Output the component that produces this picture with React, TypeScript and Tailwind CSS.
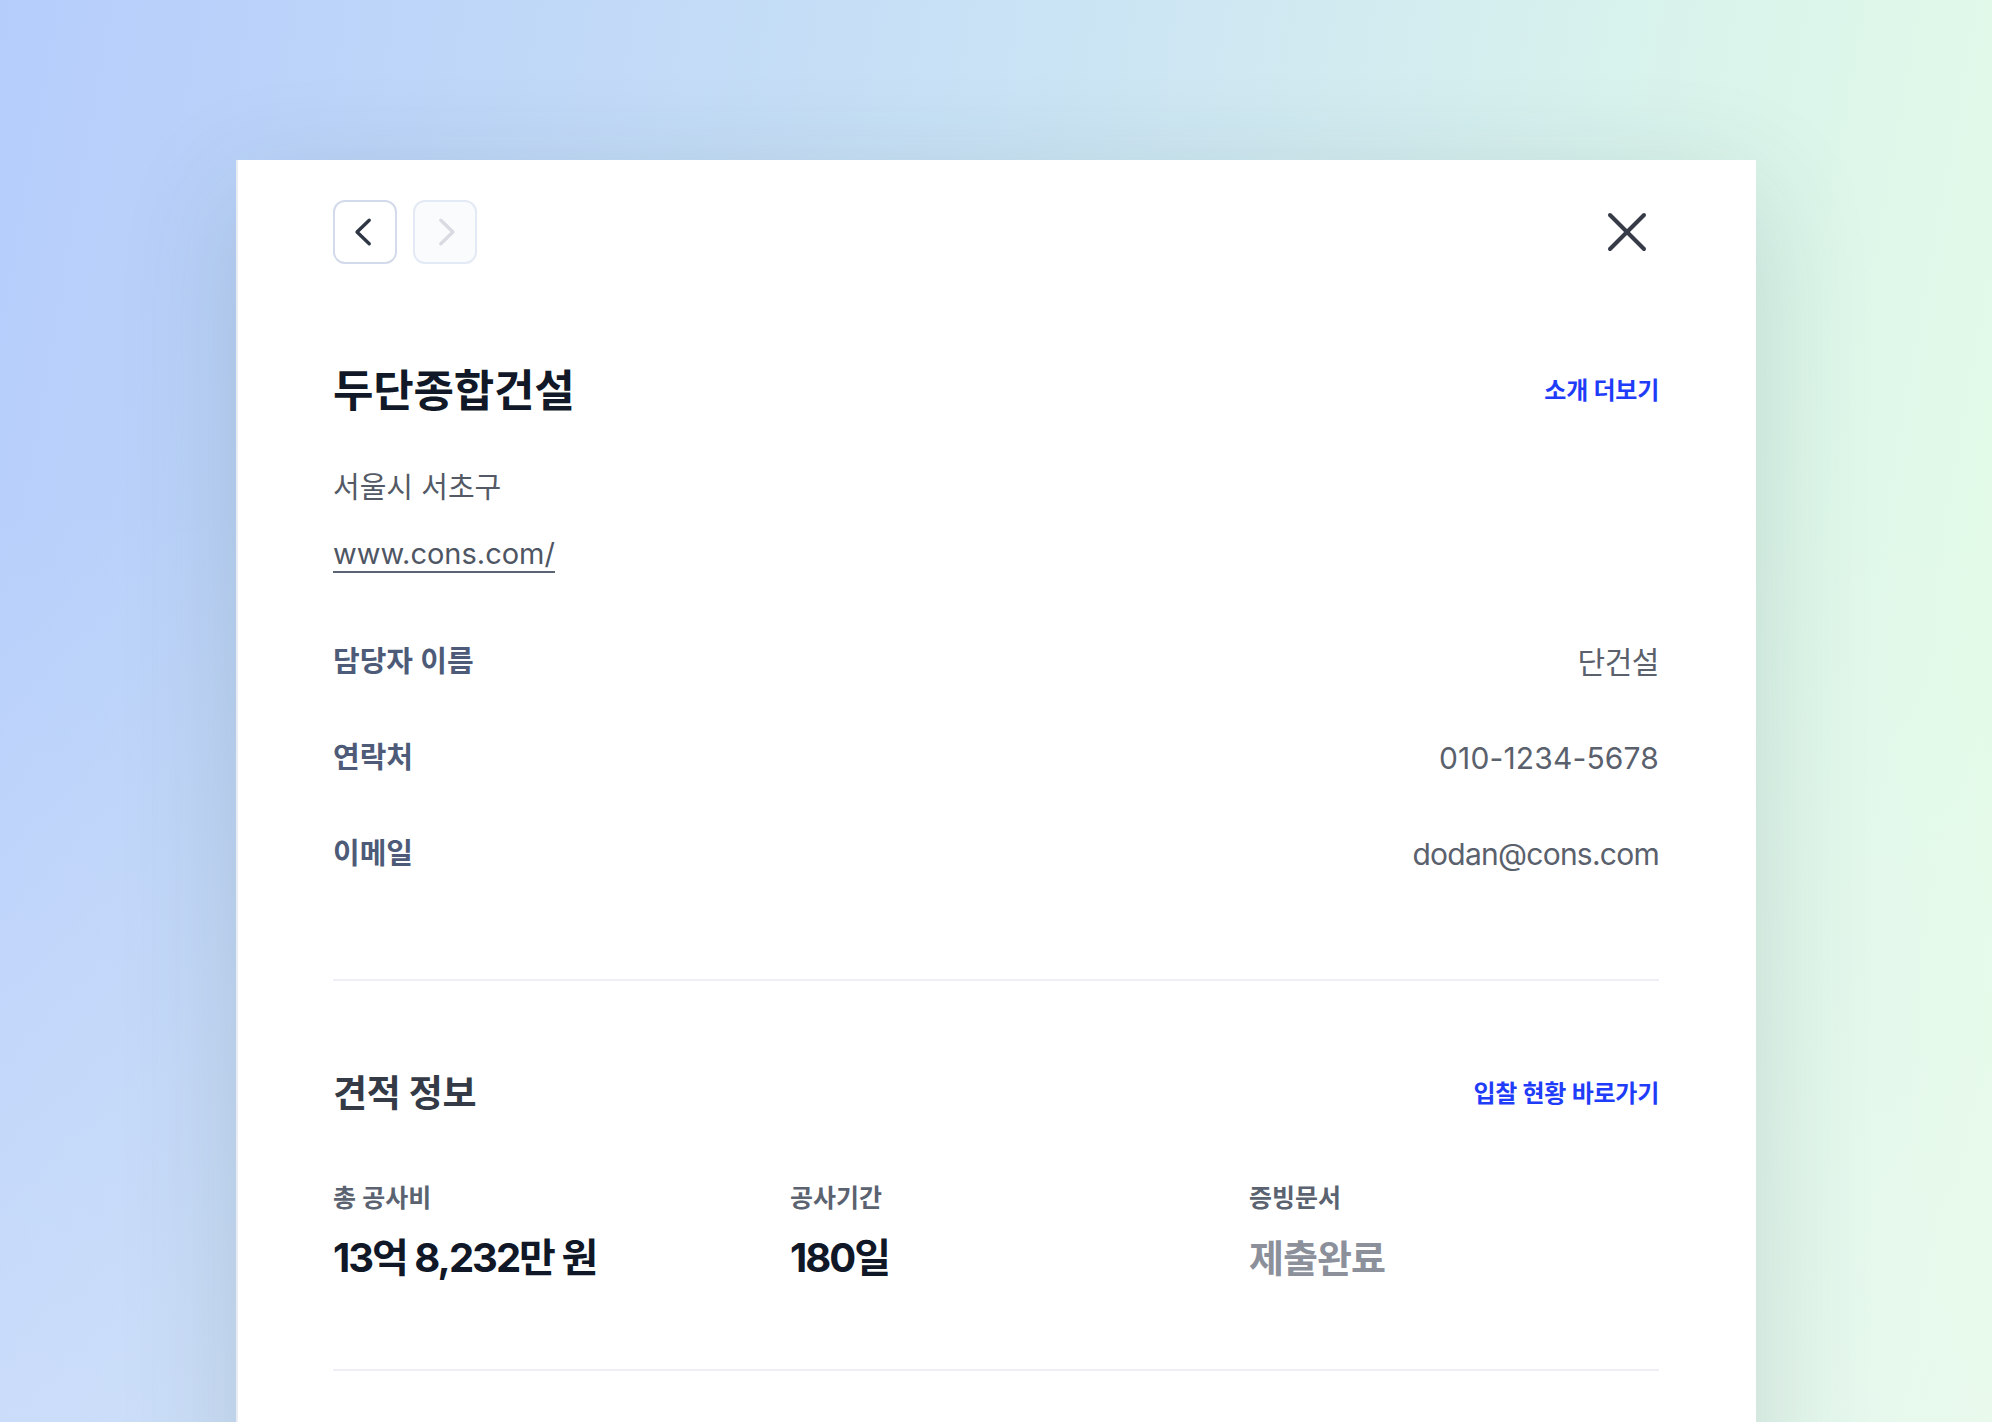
import React from "react";

function ChevronLeft({ color }: { color: string }) {
  return (
    <svg width="64" height="64" viewBox="0 0 64 64" fill="none">
      <polyline points="36.5,19.5 23.5,32 36.5,44.5" stroke={color} strokeWidth="3.6" strokeLinecap="round" strokeLinejoin="round" />
    </svg>
  );
}

function ChevronRight({ color }: { color: string }) {
  return (
    <svg width="64" height="64" viewBox="0 0 64 64" fill="none">
      <polyline points="27.5,19.5 40.5,32 27.5,44.5" stroke={color} strokeWidth="3.6" strokeLinecap="round" strokeLinejoin="round" />
    </svg>
  );
}

function CloseIcon() {
  return (
    <svg width="40" height="40" viewBox="0 0 40 40" fill="none">
      <line x1="3" y1="3" x2="37" y2="37" stroke="#363b47" strokeWidth="4" strokeLinecap="round" />
      <line x1="37" y1="3" x2="3" y2="37" stroke="#363b47" strokeWidth="4" strokeLinecap="round" />
    </svg>
  );
}

function InfoRow({ label, value, valueClass }: { label: string; value: string; valueClass: string }) {
  return (
    <div className="flex h-[40px] items-center justify-between">
      <span className="text-[29px] leading-[40px] font-semibold tracking-[0em] text-[#4d5b78]">{label}</span>
      <span className={valueClass}>{value}</span>
    </div>
  );
}

export default function App() {
  return (
    <div className="h-[1422px] w-full overflow-hidden bg-[linear-gradient(to_bottom,rgba(238,243,250,0)_35%,rgba(238,243,250,0.3)_100%),linear-gradient(100deg,#b5cdfb_0%,#c9e2f5_45%,#d9f3ec_75%,#e6fde6_100%)] pt-[160px] font-['Inter','Noto_Sans_CJK_KR',sans-serif]">
      <div className="mx-auto w-[1520px] border-l-2 border-[#e9ecf2] bg-white pb-[300px] pl-[95px] pr-[97px] pt-[40px] shadow-[0_30px_110px_rgba(40,70,60,0.16)]">
        {/* top bar */}
        <div className="flex h-16 items-center justify-between">
          <div className="flex gap-4">
            <button className="flex h-16 w-16 items-center justify-center rounded-xl border-2 border-[#d3daea] bg-white">
              <ChevronLeft color="#2f3644" />
            </button>
            <button className="flex h-16 w-16 items-center justify-center rounded-xl border-2 border-[#e3e9f5] bg-[#fafbfc]">
              <ChevronRight color="#d8dbe1" />
            </button>
          </div>
          <button className="flex h-16 w-16 items-center justify-center">
            <CloseIcon />
          </button>
        </div>

        {/* title */}
        <div className="mt-[99px] flex h-[56px] items-center justify-between">
          <h1 className="text-[44px] leading-[56px] font-bold tracking-[-0.005em] text-[#111827]">두단종합건설</h1>
          <a className="text-[24px] leading-[56px] font-bold tracking-[-0.01em] text-[#1f3cf8]">소개 더보기</a>
        </div>

        <p className="mt-[49px] h-[40px] text-[29px] leading-[40px] tracking-[0em] text-[#535a66]">서울시 서초구</p>
        <p className="mt-[26px] h-[40px] text-[29px] leading-[40px] tracking-[0em] text-[#4f5663]">
          <span className="underline decoration-[2px] underline-offset-[7px] decoration-[#5b6473]">www.cons.com/</span>
        </p>

        <div className="mt-[68px] flex flex-col gap-[56px]">
          <InfoRow
            label="담당자 이름"
            value="단건설"
            valueClass="text-[30px] leading-[40px] font-normal tracking-[-0.015em] text-[#5a616d]"
          />
          <InfoRow
            label="연락처"
            value="010-1234-5678"
            valueClass="text-[30px] leading-[40px] font-normal tracking-[0.005em] text-[#5a616d]"
          />
          <InfoRow
            label="이메일"
            value="dodan@cons.com"
            valueClass="text-[30px] leading-[40px] font-normal tracking-[-0.025em] text-[#5a616d]"
          />
        </div>

        <div className="mt-[105px] h-[2px] bg-[#eeeff4]" />

        {/* 견적 정보 */}
        <div className="mt-[89px] flex h-[48px] items-center justify-between">
          <h2 className="text-[37px] leading-[48px] font-bold tracking-[-0.01em] text-[#343b47]">견적 정보</h2>
          <a className="text-[24px] leading-[48px] font-bold tracking-[-0.01em] text-[#1f3cf8]">입찰 현황 바로가기</a>
        </div>

        <div className="mt-[64px] grid grid-cols-[457px_459px_1fr]">
          <div className="flex flex-col">
            <span className="h-[32px] text-[25px] leading-[32px] font-semibold tracking-[0em] text-[#5b6270]">총 공사비</span>
            <span className="mt-[20px] h-[48px] text-[40px] leading-[48px] font-bold tracking-[-0.05em] text-[#101828]">13억 8,232만 원</span>
          </div>
          <div className="flex flex-col">
            <span className="h-[32px] text-[25px] leading-[32px] font-semibold tracking-[0em] text-[#5b6270]">공사기간</span>
            <span className="mt-[20px] h-[48px] text-[40px] leading-[48px] font-bold tracking-[-0.05em] text-[#101828]">180일</span>
          </div>
          <div className="flex flex-col">
            <span className="h-[32px] text-[25px] leading-[32px] font-semibold tracking-[0em] text-[#5b6270]">증빙문서</span>
            <span className="mt-[20px] h-[48px] text-[38px] leading-[48px] font-bold tracking-[-0.025em] text-[#8b909b]">제출완료</span>
          </div>
        </div>

        <div className="mt-[87px] h-[2px] bg-[#eeeff4]" />
      </div>
    </div>
  );
}
